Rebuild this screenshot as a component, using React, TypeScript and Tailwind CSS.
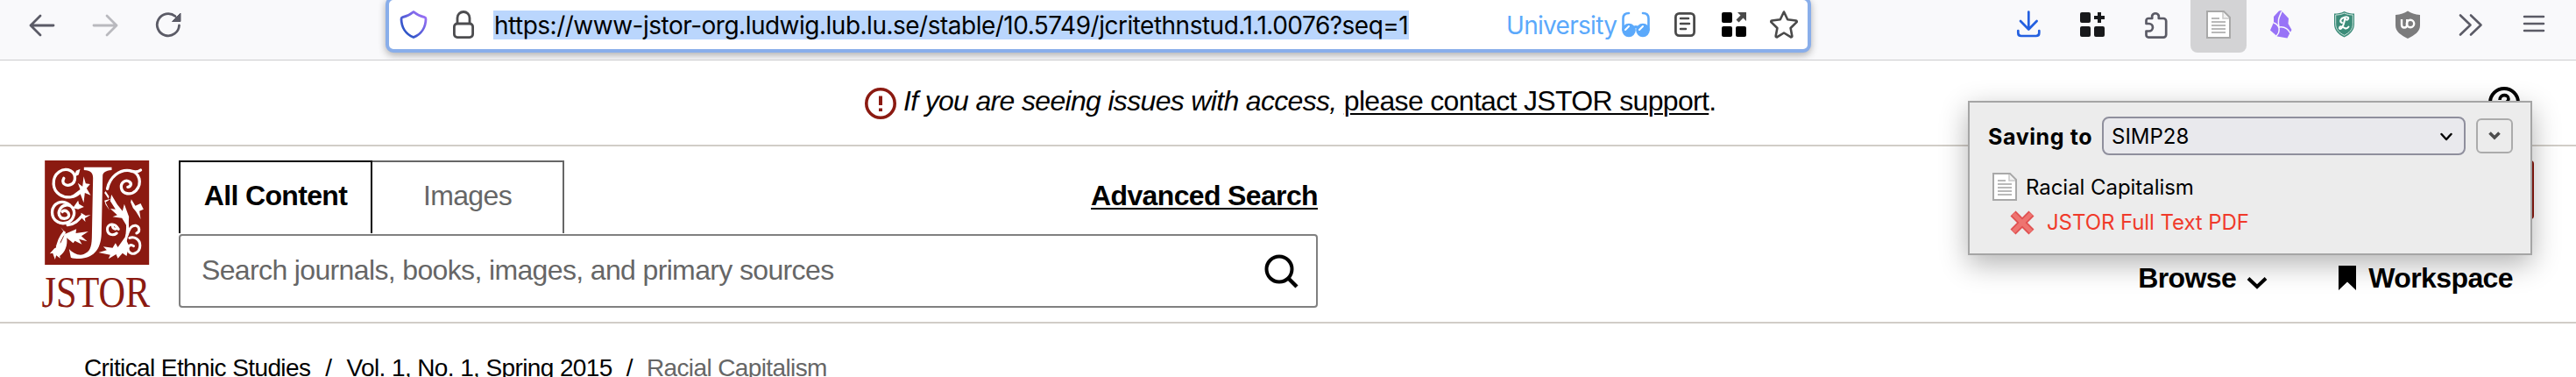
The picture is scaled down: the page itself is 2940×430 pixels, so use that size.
import type { ReactNode } from 'react';
import clsx from 'clsx';

type IconProps = { className?: string; children: ReactNode; box?: string };

function Icon({ className, children, box = '0 0 32 32' }: IconProps) {
  return (
    <svg viewBox={box} fill="none" className={clsx('shrink-0', className ?? 'h-8 w-8')}>
      {children}
    </svg>
  );
}

function PageIcon({ className }: { className?: string }) {
  return (
    <Icon className={className}>
      <path d="M3 1h19l7 7v23H3z" fill="#fff" stroke="#a8a8a8" strokeWidth="2" />
      <path d="M21 2v7h7" fill="#f1f1f1" stroke="#c9c9c9" strokeWidth="1.500" />
      <path d="M8 9h9M8 13h16M8 17h16M8 21h16M8 25h16" stroke="#b9b9b9" strokeWidth="2" />
    </Icon>
  );
}

function NavButtons() {
  return (
    <div className="flex w-[440px] items-center pt-[13px] pl-8">
      <Icon>
        <path d="M29 16H3M14 5 3 16l11 11" stroke="#5b5b66" strokeWidth="2.800" strokeLinecap="round" strokeLinejoin="round" />
      </Icon>
      <Icon className="ml-10 h-8 w-8">
        <path d="M3 16h26M18 5l11 11-11 11" stroke="#b9b9be" strokeWidth="2.800" strokeLinecap="round" strokeLinejoin="round" />
      </Icon>
      <Icon className="ml-10 h-8 w-8">
        <path d="M28.500 16A12.600 12.600 0 1 1 24 5.500" stroke="#5b5b66" strokeWidth="2.800" strokeLinecap="round" />
        <path d="M30 2v9.500H20.500z" fill="#5b5b66" stroke="#5b5b66" strokeLinejoin="round" />
      </Icon>
    </div>
  );
}

function UrlBar() {
  return (
    <div className="-mt-1 flex h-16 w-[1627px] shrink-0 rounded-[9px] border-4 border-[#89aeea] bg-white pt-3 pl-3 shadow-[0_3px_9px_rgba(0,0,0,0.3)]">
      <Icon>
        <defs>
          <linearGradient id="shield" x1="0" y1="1" x2="1" y2="0">
            <stop offset="0.2" stopColor="#2f55c8" />
            <stop offset="0.9" stopColor="#9a70f5" />
          </linearGradient>
        </defs>
        <path d="M16 1.500c3 2.500 7.500 5 12.500 6.200 1 0.300 1.500 1 1.500 2C29.800 19 25 27 16 30.500 7 27 2.200 19 2 9.700c0-1 0.500-1.700 1.500-2C8.500 6.500 13 4 16 1.500z" stroke="url(#shield)" strokeWidth="2.800" strokeLinejoin="round" />
      </Icon>
      <Icon className="ml-[25px] h-8 w-8">
        <rect x="5.400" y="15" width="21.200" height="15.600" rx="3.500" stroke="#4c4c4f" strokeWidth="2.800" />
        <path d="M9 15V8.500a7 7 0 0 1 14 0V15" stroke="#4c4c4f" strokeWidth="2.800" />
      </Icon>
      <span className="ml-[18px] h-[33px] w-[1045px] shrink-0 whitespace-nowrap bg-[#bad6fd] pl-px font-['Inter',sans-serif] text-[28px] leading-[34px] tracking-[-0.500px] text-black">
        https://www-jstor-org.ludwig.lub.lu.se/stable/10.5749/jcritethnstud.1.1.0076?seq=1
      </span>
      <span className="ml-[111px] w-[130px] whitespace-nowrap font-['Inter',sans-serif] text-[28px] leading-[34px] tracking-[-0.700px] text-[#5ba9fb]">
        University
      </span>
      <Icon className="ml-0.5 h-8 w-8">
        <path d="M8 3C3.500 3 1.500 5 1.500 9v13M24 3c4.500 0 6.500 2 6.500 6v13" stroke="#5ba9fb" strokeWidth="2.600" strokeLinecap="round" />
        <circle cx="8" cy="22.500" r="7.800" fill="#5ba9fb" />
        <circle cx="24" cy="22.500" r="7.800" fill="#5ba9fb" />
        <path d="M13 20c2-2 4-2 6 0" stroke="#5ba9fb" strokeWidth="2.600" />
        <path d="m4 22 4-4M20 22l4-4" stroke="#fff" strokeWidth="2" strokeLinecap="round" />
      </Icon>
      <Icon className="ml-6 h-8 w-8">
        <rect x="5.400" y="3.400" width="21.200" height="25.200" rx="4" stroke="#4a4a4a" strokeWidth="2.800" />
        <path d="M11 9h9M11 15h10M11 21h6" stroke="#4a4a4a" strokeWidth="2.500" strokeLinecap="round" />
      </Icon>
      <Icon className="ml-6 h-8 w-8">
        <rect x="2" y="2" width="12" height="12" rx="2" fill="#000" />
        <rect x="2" y="18" width="12" height="12" rx="2" fill="#000" />
        <rect x="18" y="18" width="12" height="12" rx="2" fill="#000" />
        <path d="M20 2h10v10l-3.500-3.500-5 5-3-3 5-5z" fill="#4a4a4a" />
      </Icon>
      <Icon className="ml-[25px] h-8 w-8">
        <path d="m16 1.500 4.200 8.700 9.600 1.300c1 0.200 1.300 1.200 0.600 1.900l-6.800 6.600 1.700 9c0.100 1-0.800 1.600-1.700 1.200L16 25.500l-7.600 4.700c-0.900 0.400-1.800-0.200-1.700-1.200l1.700-9-6.800-6.600c-0.700-0.700-0.400-1.700 0.600-1.900l9.600-1.300z" stroke="#4a4a4a" strokeWidth="2.600" strokeLinejoin="round" />
      </Icon>
    </div>
  );
}

function Extensions() {
  return (
    <div className="flex h-[60px] flex-1 items-start pl-[233px] [&>svg]:mt-3">
      <Icon>
        <path d="M15.300 1.500V21M6 12l9.300 9.500L24.600 12" stroke="#2460e0" strokeWidth="2.700" strokeLinecap="round" strokeLinejoin="round" />
        <path d="M3.300 23v2.500q0 3.500 3.500 3.500h17q3.500 0 3.500-3.500V23" stroke="#2460e0" strokeWidth="2.700" strokeLinecap="round" />
      </Icon>
      <Icon className="ml-10 h-8 w-8">
        <rect x="2" y="2" width="12" height="12" rx="2" fill="#18191b" />
        <rect x="2" y="18" width="12" height="12" rx="2" fill="#18191b" />
        <rect x="18" y="18" width="12" height="12" rx="2" fill="#18191b" />
        <path d="M24 2v12M18 8h12" stroke="#18191b" strokeWidth="4" />
      </Icon>
      <Icon className="ml-10 h-8 w-8">
        <path d="M5.500 15V11.500a2.500 2.500 0 0 1 2.500-2.500h4.200V6a4 4 0 0 1 7.600 0v3h5.400a3 3 0 0 1 3 3v15.600a3 3 0 0 1-3 3H8a2.500 2.500 0 0 1-2.500-2.500V23.500h3.200a4.200 4.200 0 0 0 0-8.500z" stroke="#5b5b66" strokeWidth="2.700" strokeLinejoin="round" />
      </Icon>
      <div className="ml-6 h-[60px] w-16 rounded-b-lg bg-[#d3d3d5] px-4 pt-3">
        <PageIcon className="h-8 w-8" />
      </div>
      <Icon className="ml-[23px] h-8 w-8">
        <path d="M14 0.500 16.500 0l8.500 9-0.500 6 4 7-3 5.500-2 4L12 29.500l-8-7 4-9V7z" fill="#9873f7" />
        <path d="M17 1c-2 6-5 8-3 18M8 14c3 1 5 3 6 6 1 5-1 7-3 9M14 19c6-1 10 1 13 7" stroke="#f9f9fb" strokeWidth="1.500" />
      </Icon>
      <Icon className="ml-[41px] h-8 w-8">
        <path d="M15.500 1c4 2 8 2.500 11.500 2.500v12c0 7-5 12-11.500 15C9 27.500 4 22.500 4 15.500v-12C8 3.500 12 3 15.500 1z" fill="#3c8c79" />
        <path d="M15.500 3c3.500 1.500 7 2 9.800 2v10.500c0 6-4.300 10.200-9.800 12.800-5.500-2.600-9.800-6.800-9.800-12.800V5c3.200 0 6.700-0.500 9.800-2z" stroke="#d3e6e0" strokeWidth="1" />
        <path d="M13 14c-3-1-2-5 2-6 4-1.500 6 0 5 1.500-1 2-3 1-3 0M16.500 8c-1 6-2 10-4 12-1.500 1.500-3 1-2.500-0.500 0.500-2 4-1 6 0.500 2 1 3.500 0 4.500-1.500" stroke="#fff" strokeWidth="2" strokeLinecap="round" />
      </Icon>
      <Icon className="ml-10 h-8 w-8">
        <path d="M16 0.500c4 2.500 8 4 14 4.500v12c0 7-6 11-14 15C8 28 2 24 2 17V5c6-0.500 10-2 14-4.500z" fill="#7c7c7d" />
        <path d="M9 10v6c0 2.500 1 3.500 3 3.500s3.200-1 3.200-3.500v-6" stroke="#fff" strokeWidth="2.400" />
        <circle cx="19" cy="15" r="4.200" stroke="#fff" strokeWidth="2.400" />
      </Icon>
      <Icon className="ml-10 h-8 w-8">
        <path d="m4 5.500 11.500 11L4 27.500M16 5.500l11.500 11L16 27.500" stroke="#5b5b66" strokeWidth="2.600" strokeLinecap="round" strokeLinejoin="round" />
      </Icon>
      <Icon className="ml-10 h-8 w-8">
        <path d="M5 7h22M5 15h22M5 23h22" stroke="#5b5b66" strokeWidth="2.500" strokeLinecap="round" />
      </Icon>
    </div>
  );
}

function Logo() {
  return (
    <svg viewBox="9 15 371 510" className="h-[170px] w-[124px] shrink-0 overflow-visible">
      <rect x="18" y="15" width="357" height="357" fill="#8b1a11" />
      <g fill="#fff">
        <path d="M152 38h95v10c-22 2-31 8-31 22l-4 195c-2 60-32 84-74 86-14 0-25-1-31-4l-6-29c14 15 33 24 50 18 20-8 27-21 28-56l4-205c0-18-8-25-31-27z" />
        <path d="M125 50l14-6-5 20-16 8z" />
        <path d="M151 70l7 24 15 2-12 14 14 24-20-8-4 34-12-32-24 4 24-18-8-22 16 12z" />
        <path d="M132 152l3 12 17 10-20 8-18-4zM142 194l16 10 17-3-20 12 2 12-14-14z" />
        <path d="M72 244l16 22 38-16-2 14 43-6-24 16 20 18-28-8 10 18-24-12-6 8-22-18c4 26-6 50-24 62l2 8-14-10-4 14-8-22-10 2 16-18 14-6-10-2 18-12c8-16 16-28 10-40z" />
        <path d="M246 132l20 34 18 22 6-24 16 44-2 40-22-36-32-4 16-6-24-22 18 2-18-28z" />
        <path d="M314 148l14 22 18-8 10 20-14 6 4 28-16-26-10-12-8-20z" />
        <path d="M292 278l14 28-8 36-14-10-16 18-6-14-26 16 6-14-40-8 28-8-12-12 32 4 10-16 8 14z" />
        <path d="M226 120l12 18-2 8-14-20zM222 152l22-6-18 12 14 28-14-20z" />
      </g>
      <g stroke="#fff" fill="none" strokeWidth="10" strokeLinecap="round">
        <path d="M83 76c-10 18 8 28 23 22 20-8 20-38 0-48-26-12-60 8-58 46 2 32 32 48 60 44 24-4 30-18 44-26" />
        <path d="M78 190c10-8 24 2 22 14-2 10-20 14-29 4-12-14 0-38 20-40 22-2 32 20 25 38-8 24-38 30-56 18-24-16-22-52 4-64 18-8 30 0 40 8M96 236c24-2 38-18 50-32" />
        <path d="M60 320c4-30 12-44 24-58" />
        <path d="M232 112c8-40 42-68 78-62 34 6 42 44 20 68-18 18-46 12-50-8-4-18 14-32 28-22 10 8 2 18-6 18M308 50c18 6 30 4 38-2" />
        <path d="M294 200c8 26 10 60 0 90-8 24-24 36-42 38M270 250c-14-26-38-16-38 0 0 20 20 24 32 14 M250 236c-2 10 6 16 14 12" strokeWidth="9" />
        <path d="M300 270c8-22 14-34 30-32 14 4 14 22 2 26M308 280c16-6 36 4 36 26 0 26-30 38-40 18-6-16 8-24 18-16" strokeWidth="9" />
      </g>
      <path d="M72 188l8 0-2 10zM66 206l8 6-2 6z" fill="#fff" />
      <text x="7" y="516" textLength="371" lengthAdjust="spacingAndGlyphs" fill="#8b1a11" fontFamily="Liberation Serif, serif" fontSize="151">
        JSTOR
      </text>
    </svg>
  );
}

function SavePopup() {
  return (
    <div className="absolute top-[115px] left-[2246px] h-[176px] w-[644px] border-2 border-[#a5a5a5] bg-[#ececec] pt-4 pl-[21px] font-['Inter',sans-serif] text-2xl text-black shadow-[0_10px_30px_rgba(0,0,0,0.3)]">
      <div className="flex h-11 items-center">
        <span className="w-[130px] pt-[3px] whitespace-nowrap text-[25px] font-bold tracking-[0.600px]">Saving to</span>
        <div className="flex h-11 w-[415px] items-center justify-between rounded-lg border-2 border-[#8f8f9d] bg-[#e9e9ed] pr-3 pl-[9px]">
          <span className="pt-0.5">SIMP28</span>
          <Icon className="mt-px h-4 w-4" box="0 0 16 16">
            <path d="m2.500 5 5.500 6 5.500-6" stroke="#000" strokeWidth="2.400" strokeLinecap="round" strokeLinejoin="round" />
          </Icon>
        </div>
        <div className="ml-3 flex h-10 w-[42px] items-center justify-center rounded-md border-2 border-[#ababab]">
          <Icon className="h-4 w-4" box="0 0 16 16">
            <path d="m2.500 4.500 5.500 5.500 5.500-5.500" stroke="#4d4d4d" strokeWidth="3.600" />
          </Icon>
        </div>
      </div>
      <div className="mt-[18px] flex h-9 items-center">
        <PageIcon className="ml-[3px] h-8 w-8" />
        <span className="ml-2 pt-0.5 tracking-[-0.050px]">Racial Capitalism</span>
      </div>
      <div className="mt-[5px] flex h-9 items-center text-[#f03a2b]">
        <Icon className="ml-[23px] h-8 w-8">
          <path d="m5.500 5.500 21 21M26.500 5.500l-21 21" stroke="#e05050" strokeWidth="8.500" />
          <path d="m6 6 20 20M26 6 6 26" stroke="#ee7470" strokeWidth="5" />
        </Icon>
        <span className="ml-3 tracking-[-0.080px]">JSTOR Full Text PDF</span>
      </div>
    </div>
  );
}

export default function App() {
  return (
    <div className="relative h-[430px] w-[2940px] overflow-hidden bg-white font-['Liberation_Sans',Arial,sans-serif] text-[32px] leading-9 text-black">
      <div className="flex h-[69px] items-start overflow-hidden border-b border-[#cccccf] bg-[#f9f9fb]">
        <NavButtons />
        <UrlBar />
        <Extensions />
      </div>

      <div className="flex h-[98px] justify-between border-b-2 border-[#d1cdc7] pr-16 pl-[986px]">
        <div className="flex pt-7 whitespace-nowrap">
          <Icon className="mt-0.5 h-[38px] w-[38px]" box="0 0 38 38">
            <circle cx="19" cy="19" r="16.200" stroke="#8b1a11" strokeWidth="3.600" />
            <path d="M19 10.500v10.500M19 24.500v3.500" stroke="#8b1a11" strokeWidth="4" />
          </Icon>
          <p className="ml-[7px] tracking-[-0.670px]">
            <em>If you are seeing issues with access, </em>
            <a className="underline decoration-2 underline-offset-[3px]">please contact JSTOR support</a>.
          </p>
        </div>
        <Icon className="mt-[30px] h-9 w-9" box="0 0 36 36">
          <circle cx="18" cy="18" r="16" stroke="#000" strokeWidth="4" />
          <path d="M13 15c0-7 10-7 10-1 0 4-5 3-5 8M18 25v3" stroke="#000" strokeWidth="3.600" />
        </Icon>
      </div>

      <header className="flex h-[202px] border-b-2 border-[#d1cdc7] pt-4 pl-12">
        <Logo />
        <div className="ml-8 w-[1300px] tracking-[-0.640px]">
          <div className="flex h-[84px] text-center leading-[76px]">
            <div className="h-[83px] w-[221px] border-2 border-b-0 border-black font-bold">All Content</div>
            <div className="h-[83px] w-[219px] border-2 border-b-0 border-l-0 border-[#666] text-[#666]">Images</div>
            <a className="ml-auto pt-0.5 font-bold underline decoration-2 underline-offset-[3px]">Advanced Search</a>
          </div>
          <div className="flex h-[84px] items-center justify-between rounded border-2 border-[#808080] pr-5 pl-6 text-[#666]">
            <span className="pb-[3px]">Search journals, books, images, and primary sources</span>
            <Icon className="h-10 w-10" box="0 0 40 40">
              <circle cx="18" cy="18" r="14.500" stroke="#000" strokeWidth="4" />
              <path d="m28 28 10 10" stroke="#000" strokeWidth="4.500" />
            </Icon>
          </div>
        </div>
        <div className="mt-auto ml-auto flex pr-[72px] pb-8 font-bold tracking-[-0.600px]">
          <span>Browse</span>
          <Icon className="mt-3 ml-3 h-6 w-6" box="0 0 24 24">
            <path d="m2 6.500 10 9.500 10-9.500" stroke="#000" strokeWidth="4" />
          </Icon>
          <Icon className="mt-1 ml-[81px] h-7 w-5" box="0 0 20 28">
            <path d="M0 0h20v28l-10-9.500L0 28z" fill="#000" />
          </Icon>
          <span className="ml-[14px]">Workspace</span>
        </div>
      </header>

      <nav className="flex pt-[33px] pl-24 text-[28px] leading-9 tracking-[-0.610px]">
        <span>Critical Ethnic Studies</span>
        <span className="mx-[17px]">/</span>
        <span>Vol. 1, No. 1, Spring 2015</span>
        <span className="mx-4">/</span>
        <span className="text-[#666]">Racial Capitalism</span>
      </nav>

      <div className="absolute top-[183px] left-[2850px] h-[67px] w-[42px] rounded-r bg-[#8b1a11]" />
      <SavePopup />
    </div>
  );
}
